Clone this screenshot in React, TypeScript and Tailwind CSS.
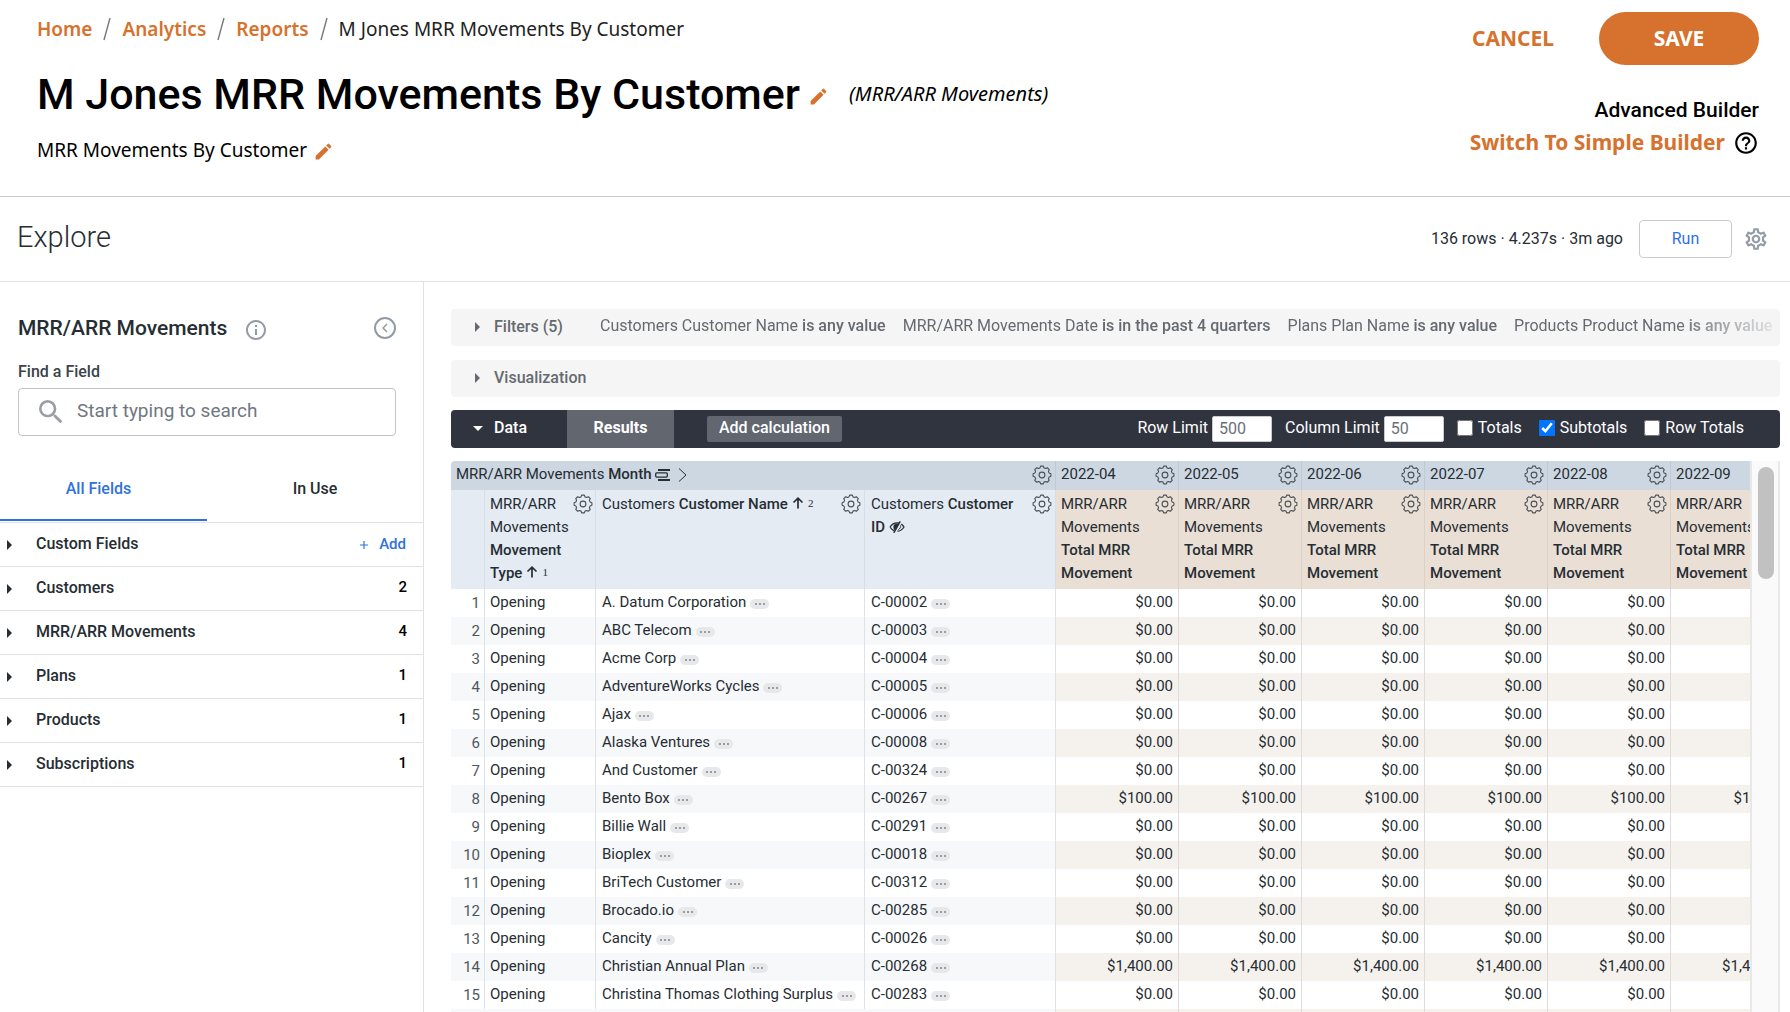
import { useState } from "react";
import type { ReactNode } from "react";
import { MdEdit, MdOutlineSettings, MdSearch, MdHelpOutline, MdOutlineInfo, MdAdd, MdChevronLeft } from "react-icons/md";

const months = ["2022-04", "2022-05", "2022-06", "2022-07", "2022-08", "2022-09"];

const rows = [
  { name: "A. Datum Corporation", id: "C-00002", amount: "$0.00" },
  { name: "ABC Telecom", id: "C-00003", amount: "$0.00" },
  { name: "Acme Corp", id: "C-00004", amount: "$0.00" },
  { name: "AdventureWorks Cycles", id: "C-00005", amount: "$0.00" },
  { name: "Ajax", id: "C-00006", amount: "$0.00" },
  { name: "Alaska Ventures", id: "C-00008", amount: "$0.00" },
  { name: "And Customer", id: "C-00324", amount: "$0.00" },
  { name: "Bento Box", id: "C-00267", amount: "$100.00" },
  { name: "Billie Wall", id: "C-00291", amount: "$0.00" },
  { name: "Bioplex", id: "C-00018", amount: "$0.00" },
  { name: "BriTech Customer", id: "C-00312", amount: "$0.00" },
  { name: "Brocado.io", id: "C-00285", amount: "$0.00" },
  { name: "Cancity", id: "C-00026", amount: "$0.00" },
  { name: "Christian Annual Plan", id: "C-00268", amount: "$1,400.00" },
  { name: "Christina Thomas Clothing Surplus", id: "C-00283", amount: "$0.00" },
];

const fieldGroups = [
  { label: "Customers", count: 2 },
  { label: "MRR/ARR Movements", count: 4 },
  { label: "Plans", count: 1 },
  { label: "Products", count: 1 },
  { label: "Subscriptions", count: 1 },
];

const filters = [
  { field: "Customers Customer Name", rule: "is any value" },
  { field: "MRR/ARR Movements Date", rule: "is in the past 4 quarters" },
  { field: "Plans Plan Name", rule: "is any value" },
  { field: "Products Product Name", rule: "is any value" },
];

// outline of the eight-tooth gear used in the column headers
const gearPath = (() => {
  const points: string[] = [];
  for (let tooth = 0; tooth < 8; tooth++) {
    const mid = (tooth * Math.PI) / 4;
    [
      [-0.27, 7.4],
      [-0.15, 9],
      [0.15, 9],
      [0.27, 7.4],
    ].forEach(([offset, r]) => {
      const x = 10 + r * Math.cos(mid + offset);
      const y = 10 + r * Math.sin(mid + offset);
      points.push(`${x.toFixed(2)} ${y.toFixed(2)}`);
    });
  }
  return `M${points.join("L")}Z`;
})();

function GearButton({ label }: { label: string }) {
  return (
    <button type="button" aria-label={label} className="shrink-0 text-[#4a5058]">
      <svg className="w-5 h-5" viewBox="0 0 20 20" fill="none" stroke="currentColor" strokeWidth="1.1" strokeLinejoin="round">
        <path d={gearPath} />
        <circle cx="10" cy="10" r="2.9" />
      </svg>
    </button>
  );
}

function Caret() {
  return (
    <svg className="w-[5px] h-[10px]" viewBox="0 0 5 10" fill="currentColor">
      <path d="M0 0L5 5L0 10Z" />
    </svg>
  );
}

function SortArrow() {
  return (
    <svg className="inline-block w-3 h-3 ml-1 align-baseline" viewBox="0 0 12 12" fill="none" stroke="currentColor" strokeWidth="1.7">
      <path d="M6 11.5V1.2M1.5 5.5L6 1.2L10.5 5.5" />
    </svg>
  );
}

function SortIndex({ children }: { children: ReactNode }) {
  return <span className="ml-1 text-[11px] leading-none font-normal font-['Liberation_Serif',serif] align-[2px]">{children}</span>;
}

function HiddenEye() {
  return (
    <svg className="inline-block w-4 h-3 ml-1 align-[-1px]" viewBox="0 0 16 12" fill="none" stroke="currentColor" strokeWidth="1.3">
      <path d="M1 6C3 3 5.4 1.8 8 1.8C8.8 1.8 9.5 1.9 10.2 2.1M12.2 3.1C13.4 3.8 14.3 4.8 15 6C13 9 10.6 10.2 8.4 10.2M5 9.6C3.4 8.9 2 7.6 1 6" />
      <path d="M9.6 3L6 9.2C4.9 8.6 4.4 7.4 4.4 6C4.4 4.2 5.8 2.6 8 2.6Z" fill="currentColor" stroke="none" />
      <path d="M11.2 0.4L4.8 11.8" strokeWidth="1.5" />
      <path d="M11.6 4.4C11.9 6 11 7.8 9.4 8.6" strokeWidth="1" />
    </svg>
  );
}

function MoreButton({ label }: { label: string }) {
  return (
    <button
      type="button"
      aria-label={label}
      className="inline-flex items-center justify-center gap-[2px] w-[19px] h-[10px] ml-1 rounded-full bg-[#e6e8e9] align-[2px]"
    >
      <span className="w-[2px] h-[2px] bg-[#9a9da1]"></span>
      <span className="w-[2px] h-[2px] bg-[#9a9da1]"></span>
      <span className="w-[2px] h-[2px] bg-[#9a9da1]"></span>
    </button>
  );
}

function Header() {
  return (
    <header className="flex justify-between h-[197px] pl-[37px] pr-[31px] border-b border-[#c9c9d2] text-black">
      <div className="pt-[15px]">
        <nav aria-label="Breadcrumb" className="flex items-center h-7 gap-[11px] text-[19px] font-['Noto_Sans',sans-serif]">
          {["Home", "Analytics", "Reports"].map((item) => (
            <span key={item} className="flex items-center gap-[11px]">
              <a href="#" className="font-semibold text-[#d6722d]">{item}</a>
              <svg className="w-2 h-6 text-[#777]" viewBox="0 0 8 24" fill="none" stroke="currentColor" strokeWidth="1.4">
                <path d="M7 1L1 23" />
              </svg>
            </span>
          ))}
          <span className="text-[#222]">M Jones MRR Movements By Customer</span>
        </nav>
        <div className="flex items-center h-14 mt-[23px]">
          <h1 className="text-[43px] font-medium">M Jones MRR Movements By Customer</h1>
          <button type="button" aria-label="Edit name" className="ml-2 mt-1 text-[#d6722d]">
            <MdEdit className="w-[21px] h-[21px]" />
          </button>
          <span className="ml-5 text-[20px] italic font-['Noto_Sans',sans-serif]">(MRR/ARR Movements)</span>
        </div>
        <div className="flex items-center h-7 mt-[14px]">
          <span className="text-[19px] font-['Noto_Sans',sans-serif]">MRR Movements By Customer</span>
          <button type="button" aria-label="Edit description" className="ml-[6px] mt-[2px] text-[#d6722d]">
            <MdEdit className="w-[21px] h-[21px]" />
          </button>
        </div>
      </div>
      <div className="flex flex-col items-end pt-3">
        <div className="flex items-center gap-[45px] text-[21px] font-bold font-['Noto_Sans',sans-serif]">
          <button type="button" className="text-[#d6722d]">CANCEL</button>
          <button type="button" className="w-40 h-[53px] rounded-full bg-[#d6722d] text-white">SAVE</button>
        </div>
        <div className="mt-[29px] text-[21px] leading-8 font-medium">Advanced Builder</div>
        <div className="flex items-center gap-2 h-[34px]">
          <a href="#" className="text-[21px] font-bold text-[#d6722d] font-['Noto_Sans',sans-serif]">Switch To Simple Builder</a>
          <MdHelpOutline className="w-[26px] h-[26px]" />
        </div>
      </div>
    </header>
  );
}

function ExploreBar() {
  return (
    <div className="flex items-center h-[85px] pl-[17px] pr-[21px] border-b border-[#e2e2e2]">
      <h2 className="pb-[2px] text-[29px] font-light">Explore</h2>
      <span className="ml-auto text-[16px]">136 rows · 4.237s · 3m ago</span>
      <button type="button" className="w-[93px] h-[38px] ml-4 border border-[#c9cbcf] rounded-sm text-[16px] text-[#2f71e0]">
        Run
      </button>
      <button type="button" aria-label="Explore settings" className="ml-[11px] text-[#939ba5]">
        <MdOutlineSettings className="w-[26px] h-[26px]" />
      </button>
    </div>
  );
}

function FieldPicker() {
  return (
    <aside className="w-[424px] shrink-0 border-r border-[#e2e2e2]">
      <div className="flex items-center px-[18px] pt-7 pr-[27px]">
        <h3 className="text-[21px] leading-9 font-medium">MRR/ARR Movements</h3>
        <MdOutlineInfo className="w-6 h-6 mt-1 ml-[17px] text-[#939ba5]" />
        <button
          type="button"
          aria-label="Collapse field picker"
          className="flex items-center justify-center w-[22px] h-[22px] ml-auto rounded-full border-2 border-[#939ba5] text-[#939ba5]"
        >
          <MdChevronLeft className="w-[18px] h-[18px]" />
        </button>
      </div>
      <div className="pl-[18px] pr-[27px] mt-[14px]">
        <label htmlFor="field-search" className="block text-[16px] leading-6 font-medium text-[#3c434a]">Find a Field</label>
        <div className="flex items-center h-12 mt-1 pl-4 border border-[#c1c4c8] rounded">
          <MdSearch className="w-8 h-8 text-[#9a9ea3]" />
          <input
            id="field-search"
            type="text"
            placeholder="Start typing to search"
            className="flex-1 min-w-0 ml-[10px] pb-[2px] text-[19px] outline-none placeholder-[#707781]"
          />
        </div>
      </div>
      <div role="tablist" className="flex h-[87px] border-b border-[#dee1e5] text-[16px] font-medium">
        <button type="button" role="tab" aria-selected="true" className="w-[207px] h-[85px] pt-[22px] pr-[10px] border-b-2 border-[#2f71e0] text-[#2f71e0]">
          All Fields
        </button>
        <button type="button" role="tab" aria-selected="false" className="flex-1 h-[85px] pt-5">
          In Use
        </button>
      </div>
      <ul>
        <li className="flex items-center h-11 pl-[7px] pr-[17px] border-b border-[#dee1e5]">
          <Caret />
          <span className="ml-6 pb-[2px] text-[16px] font-medium">Custom Fields</span>
          <button type="button" className="flex items-center gap-2 ml-auto text-[15px] font-medium text-[#2f71e0]">
            <MdAdd className="w-[14px] h-[14px]" />
            Add
          </button>
        </li>
        {fieldGroups.map((group) => (
          <li key={group.label} className="flex items-center h-11 pl-[7px] pr-4 border-b border-[#dee1e5]">
            <Caret />
            <span className="ml-6 pb-[2px] text-[16px] font-medium">{group.label}</span>
            <span className="ml-auto pb-[2px] text-[15px] font-medium text-black">{group.count}</span>
          </li>
        ))}
      </ul>
    </aside>
  );
}

function DataBar() {
  const [totals, setTotals] = useState(false);
  const [subtotals, setSubtotals] = useState(true);
  const [rowTotals, setRowTotals] = useState(false);

  return (
    <div className="flex items-center h-[38px] mt-[13px] pr-[36px] rounded bg-[#30343f] text-[16px] text-white">
      <button type="button" className="flex items-center w-[116px] pl-[22px] pb-[2px] font-medium">
        <svg className="w-[10px] h-[5px]" viewBox="0 0 10 5" fill="currentColor">
          <path d="M0 0H10L5 5Z" />
        </svg>
        <span className="ml-[11px]">Data</span>
      </button>
      <button type="button" className="w-[107px] h-full pb-[2px] bg-[#62666f] font-bold">Results</button>
      <button type="button" className="w-[135px] h-[26px] ml-[33px] pb-[2px] rounded-xs bg-[#62666f] font-medium">Add calculation</button>
      <label htmlFor="row-limit" className="ml-auto pb-[2px]">Row Limit</label>
      <input id="row-limit" type="text" defaultValue="500" className="w-[60px] h-[26px] ml-1 pl-[6px] pb-[2px] border border-[#c9cbcf] rounded-xs bg-white text-[#6b7078]" />
      <label htmlFor="column-limit" className="ml-[13px] pb-[2px]">Column Limit</label>
      <input id="column-limit" type="text" defaultValue="50" className="w-[60px] h-[26px] ml-1 pl-[6px] pb-[2px] border border-[#c9cbcf] rounded-xs bg-white text-[#6b7078]" />
      <label className="flex items-center gap-[5px] ml-[13px] pb-[3px]">
        <input type="checkbox" className="w-4 h-4" checked={totals} onChange={(e) => setTotals(e.target.checked)} />
        Totals
      </label>
      <label className="flex items-center gap-[5px] ml-[17px] pb-[3px]">
        <input type="checkbox" className="w-4 h-4" checked={subtotals} onChange={(e) => setSubtotals(e.target.checked)} />
        Subtotals
      </label>
      <label className="flex items-center gap-[5px] ml-[17px] pb-[3px]">
        <input type="checkbox" className="w-4 h-4" checked={rowTotals} onChange={(e) => setRowTotals(e.target.checked)} />
        Row Totals
      </label>
    </div>
  );
}

function ResultsTable() {
  return (
    <table className="table-fixed w-[1343px] border-separate border-spacing-0 text-[15px] text-left">
      <colgroup>
        <col className="w-[34px]" />
        <col className="w-[111px]" />
        <col className="w-[269px]" />
        <col className="w-[191px]" />
        {months.map((month) => (
          <col key={month} className="w-[123px]" />
        ))}
      </colgroup>
      <thead>
        <tr className="h-[29px] bg-[#cdd7e2]">
          <th colSpan={4} className="p-0 pb-[2px] pl-[5px] pr-[3px] font-normal border-r border-[#bfcad6] rounded-tl">
            <div className="flex items-center">
              <span>
                MRR/ARR Movements <span className="font-medium">Month</span>
              </span>
              <svg className="w-[15px] h-3 ml-[3px]" viewBox="0 0 15 12" fill="none" stroke="currentColor">
                <path d="M3 1H15M3 11H15" strokeWidth="2" />
                <rect x="0.7" y="3.9" width="11.6" height="4.2" rx="1" strokeWidth="1.3" />
              </svg>
              <svg className="w-[9px] h-[14px] ml-2" viewBox="0 0 9 14" fill="none" stroke="currentColor">
                <path d="M1 0.5L8 7L1 13.5" />
              </svg>
              <span className="flex ml-auto">
                <GearButton label="Month options" />
              </span>
            </div>
          </th>
          {months.map((month) => (
            <th key={month} className="p-0 pb-[2px] pl-[5px] pr-[3px] font-normal border-r border-[#bfcad6]">
              <div className="flex items-center justify-between">
                {month}
                <GearButton label={`${month} options`} />
              </div>
            </th>
          ))}
        </tr>
        <tr className="h-[99px] bg-[#e4ebf3] align-top leading-[23px]">
          <th className="border-r border-[#d6dee7]"></th>
          <th className="p-0 pt-[3px] pl-[5px] pr-[2px] font-normal border-r border-[#d6dee7]">
            <div className="flex justify-between items-start">
              <span>
                MRR/ARR
                <br />
                Movements
                <br />
                <span className="font-medium">
                  Movement
                  <br />
                  Type
                  <SortArrow />
                </span>
                <SortIndex>1</SortIndex>
              </span>
              <span className="flex -ml-6 pt-px">
                <GearButton label="Movement Type options" />
              </span>
            </div>
          </th>
          <th className="p-0 pt-[3px] pl-[6px] pr-[3px] font-normal border-r border-[#d6dee7]">
            <div className="flex justify-between items-start">
              <span>
                Customers <span className="font-medium">Customer Name</span>
                <SortArrow />
                <SortIndex>2</SortIndex>
              </span>
              <span className="flex pt-px">
                <GearButton label="Customer Name options" />
              </span>
            </div>
          </th>
          <th className="p-0 pt-[3px] pl-[6px] pr-[3px] font-normal border-r border-[#d6dee7]">
            <div className="flex justify-between items-start">
              <span>
                Customers{" "}
                <span className="font-medium">
                  Customer
                  <br />
                  ID
                </span>
                <HiddenEye />
              </span>
              <span className="flex pt-px">
                <GearButton label="Customer ID options" />
              </span>
            </div>
          </th>
          {months.map((month) => (
            <th key={month} className="p-0 pt-[3px] pl-[5px] pr-[3px] font-normal bg-[#eadfd5] border-r border-[#dcd1c8]">
              <div className="flex justify-between items-start">
                <span>
                  MRR/ARR
                  <br />
                  Movements
                  <br />
                  <span className="font-medium">
                    Total MRR
                    <br />
                    Movement
                  </span>
                </span>
                <span className="flex -ml-6 pt-px">
                  <GearButton label={`${month} Total MRR Movement options`} />
                </span>
              </div>
            </th>
          ))}
        </tr>
      </thead>
      <tbody>
        {rows.map((row, index) => (
          <tr key={row.id} className="group h-7 even:bg-[#f6f8fa]">
            <td className="p-0 pr-1 text-right text-[#4f565e] border-r border-[#e0e3e6]">{index + 1}</td>
            <td className="p-0 pb-[2px] pl-[5px] border-r border-[#e0e3e6]">Opening</td>
            <td className="p-0 pb-[2px] pl-[6px] whitespace-nowrap border-r border-[#e0e3e6]">
              {row.name}
              <MoreButton label={`More about ${row.name}`} />
            </td>
            <td className="p-0 pb-[2px] pl-[6px] border-r border-[#e0e3e6]">
              {row.id}
              <MoreButton label={`More about ${row.id}`} />
            </td>
            {months.map((month) => (
              <td key={month} className="p-0 pb-[2px] pr-[5px] text-right border-r border-[#dddcdb] group-even:bg-[#f5f2ee]">
                {row.amount}
              </td>
            ))}
          </tr>
        ))}
        <tr className="h-7 bg-[#f6f8fa]">
          <td colSpan={4} className="border-r border-[#e0e3e6]"></td>
          {months.map((month) => (
            <td key={month} className="bg-[#f5f2ee] border-r border-[#dddcdb]"></td>
          ))}
        </tr>
      </tbody>
    </table>
  );
}

export default function App() {
  return (
    <div className="flex flex-col h-screen overflow-hidden bg-white text-[#262d33] font-[Roboto,sans-serif]">
      <Header />
      <ExploreBar />
      <div className="flex flex-1 min-h-0">
        <FieldPicker />
        <main className="flex flex-col flex-1 min-w-0 pt-[27px] pl-[27px] pr-[10px]">
          <section className="flex items-center shrink-0 h-[37px] pl-6 pr-[6px] pb-[2px] rounded bg-[#f5f5f5] text-[16px] text-[#656a70]">
            <Caret />
            <button type="button" className="w-[120px] pl-[14px] shrink-0 text-left font-medium whitespace-nowrap">Filters (5)</button>
            <div className="flex flex-1 min-w-0 gap-[17px] pb-[2px] overflow-hidden whitespace-nowrap mask-r-from-[calc(100%-100px)] mask-r-to-[calc(100%+15px)]">
              {filters.map((filter) => (
                <span key={filter.field}>
                  {filter.field} <span className="font-medium">{filter.rule}</span>
                </span>
              ))}
            </div>
          </section>
          <section className="flex items-center shrink-0 h-[37px] mt-[14px] pl-6 pb-[2px] rounded bg-[#f5f5f5] text-[16px] text-[#656a70]">
            <Caret />
            <button type="button" className="pl-[14px] font-medium">Visualization</button>
          </section>
          <DataBar />
          <div className="flex flex-1 min-h-0 mt-[13px]">
            <div className="flex-1 min-w-0 overflow-hidden">
              <ResultsTable />
            </div>
            <div className="w-[30px] shrink-0 pt-[6px] pl-[6px] border-x-2 border-[#e8e8e8] bg-[#fafafa]">
              <div className="w-4 h-28 rounded-full bg-[#c1c1c1]"></div>
            </div>
          </div>
        </main>
      </div>
    </div>
  );
}
